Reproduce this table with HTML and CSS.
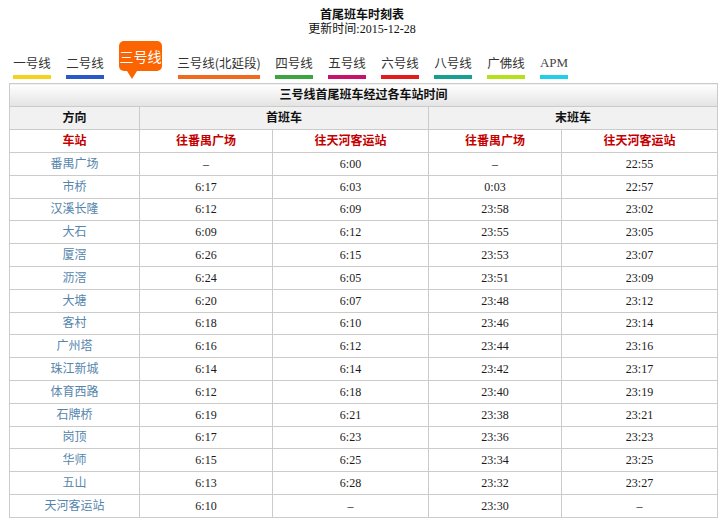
FILE: index.html
```html
<!DOCTYPE html>
<html lang="zh-CN">
<head>
<meta charset="utf-8">
<title>首尾班车时刻表</title>
<link rel="stylesheet" href="styles.css">
</head>
<body>
<div class="head">
  <div class="title">首尾班车时刻表</div>
  <div class="update">更新时间:2015-12-28</div>
</div>
<div class="tabs">
  <div class="tab"><span class="tab-text">一号线</span><i class="bar l1"></i></div>
  <div class="tab"><span class="tab-text">二号线</span><i class="bar l2"></i></div>
  <div class="tab tab-active"><span class="active-box">三号线</span></div>
  <div class="tab tab-wide"><span class="tab-text">三号线(北延段)</span><i class="bar l3"></i></div>
  <div class="tab"><span class="tab-text">四号线</span><i class="bar l4"></i></div>
  <div class="tab"><span class="tab-text">五号线</span><i class="bar l5"></i></div>
  <div class="tab"><span class="tab-text">六号线</span><i class="bar l6"></i></div>
  <div class="tab"><span class="tab-text">八号线</span><i class="bar l8"></i></div>
  <div class="tab"><span class="tab-text">广佛线</span><i class="bar lgf"></i></div>
  <div class="tab tab-apm"><span class="tab-text apm">APM</span><i class="bar lapm"></i></div>
</div>
<table class="tt">
  <colgroup>
    <col class="c1"><col class="c2"><col class="c3"><col class="c2"><col class="c3">
  </colgroup>
  <tr class="cap"><td colspan="5">三号线首尾班车经过各车站时间</td></tr>
  <tr class="hd"><td>方向</td><td colspan="2">首班车</td><td colspan="2">末班车</td></tr>
  <tr class="sub"><td>车站</td><td>往番禺广场</td><td>往天河客运站</td><td>往番禺广场</td><td>往天河客运站</td></tr>
  <tr><td class="st">番禺广场</td><td>–</td><td>6:00</td><td>–</td><td>22:55</td></tr>
  <tr><td class="st">市桥</td><td>6:17</td><td>6:03</td><td>0:03</td><td>22:57</td></tr>
  <tr><td class="st">汉溪长隆</td><td>6:12</td><td>6:09</td><td>23:58</td><td>23:02</td></tr>
  <tr><td class="st">大石</td><td>6:09</td><td>6:12</td><td>23:55</td><td>23:05</td></tr>
  <tr><td class="st">厦滘</td><td>6:26</td><td>6:15</td><td>23:53</td><td>23:07</td></tr>
  <tr><td class="st">沥滘</td><td>6:24</td><td>6:05</td><td>23:51</td><td>23:09</td></tr>
  <tr><td class="st">大塘</td><td>6:20</td><td>6:07</td><td>23:48</td><td>23:12</td></tr>
  <tr><td class="st">客村</td><td>6:18</td><td>6:10</td><td>23:46</td><td>23:14</td></tr>
  <tr><td class="st">广州塔</td><td>6:16</td><td>6:12</td><td>23:44</td><td>23:16</td></tr>
  <tr><td class="st">珠江新城</td><td>6:14</td><td>6:14</td><td>23:42</td><td>23:17</td></tr>
  <tr><td class="st">体育西路</td><td>6:12</td><td>6:18</td><td>23:40</td><td>23:19</td></tr>
  <tr><td class="st">石牌桥</td><td>6:19</td><td>6:21</td><td>23:38</td><td>23:21</td></tr>
  <tr><td class="st">岗顶</td><td>6:17</td><td>6:23</td><td>23:36</td><td>23:23</td></tr>
  <tr><td class="st">华师</td><td>6:15</td><td>6:25</td><td>23:34</td><td>23:25</td></tr>
  <tr><td class="st">五山</td><td>6:13</td><td>6:28</td><td>23:32</td><td>23:27</td></tr>
  <tr><td class="st">天河客运站</td><td>6:10</td><td>–</td><td>23:30</td><td>–</td></tr>
</table>
</body>
</html>
```

FILE: styles.css
```css
html, body {
  margin: 0;
  padding: 0;
  background: #fff;
}
body {
  font-family: "Liberation Serif", "Noto Sans CJK SC", serif;
  font-size: 12px;
  color: #111;
}
.head {
  height: 38px;
  padding-top: 8px;
  box-sizing: border-box;
  text-align: center;
}
.title {
  font-weight: bold;
  font-size: 12px;
  line-height: 14px;
  height: 14px;
}
.update {
  font-size: 12px;
  line-height: 15px;
}
.tabs {
  display: flex;
  gap: 15px;
  padding-left: 13px;
  margin-top: 3px;
  height: 42px;
}
.tab {
  width: 38px;
  display: flex;
  flex-direction: column;
  align-items: center;
  padding-top: 14px;
  box-sizing: border-box;
}
.tab-wide { width: 82px; margin-left: 1px; }
.tab-apm { width: 28px; }
.tab-text {
  font-family: "Noto Sans CJK SC", sans-serif;
  font-size: 12.5px;
  line-height: 16px;
  height: 16px;
  color: #333;
  white-space: nowrap;
}
.tab-text.apm {
  font-family: "Liberation Serif", serif;
  font-size: 13px;
  color: #444;
}
.bar {
  display: block;
  width: 100%;
  height: 4px;
  margin-top: 4px;
}
.l1 { background: #f4d21d; }
.l2 { background: #2a58c8; }
.l3 { background: #f1691f; }
.l4 { background: #3ba63f; }
.l5 { background: #c8106d; }
.l6 { background: #e41b1b; }
.l8 { background: #17a091; }
.lgf { background: #b5e01c; }
.lapm { background: #21cfe9; }
.tab-active {
  width: 43px;
  padding-top: 0;
  position: relative;
}
.active-box {
  display: block;
  width: 43px;
  height: 30px;
  line-height: 30px;
  text-align: center;
  background: #fb6400;
  color: #fff;
  border-radius: 5px;
  font-family: "Noto Sans CJK SC", sans-serif;
  font-size: 14px;
  position: relative;
}
.active-box::after {
  content: "";
  position: absolute;
  left: 8px;
  top: 30px;
  border-left: 5px solid transparent;
  border-right: 5px solid transparent;
  border-top: 8px solid #fb6400;
}
.tt {
  margin-left: 9px;
  width: 708px;
  table-layout: fixed;
  border-collapse: collapse;
  border: 1px solid #cbcbcb;
}
.c1 { width: 130px; }
.c2 { width: 133px; }
.c3 { width: 156px; }
.tt td {
  border: 1px solid #cbcbcb;
  text-align: center;
  padding: 0;
  height: 21.8px;
  line-height: 14px;
  font-size: 12px;
  color: #1a1a1a;
}
.cap td, .hd td, .sub td {
  height: 22px;
}
.cap td {
  font-weight: bold;
  background: linear-gradient(#ffffff, #e3e3e3);
  color: #111;
}
.hd td {
  background: #f1f1f1;
  font-weight: bold;
  color: #111;
}
.sub td {
  color: #c40000;
  font-weight: bold;
}
.tt td.st {
  color: #5585ac;
}
```
